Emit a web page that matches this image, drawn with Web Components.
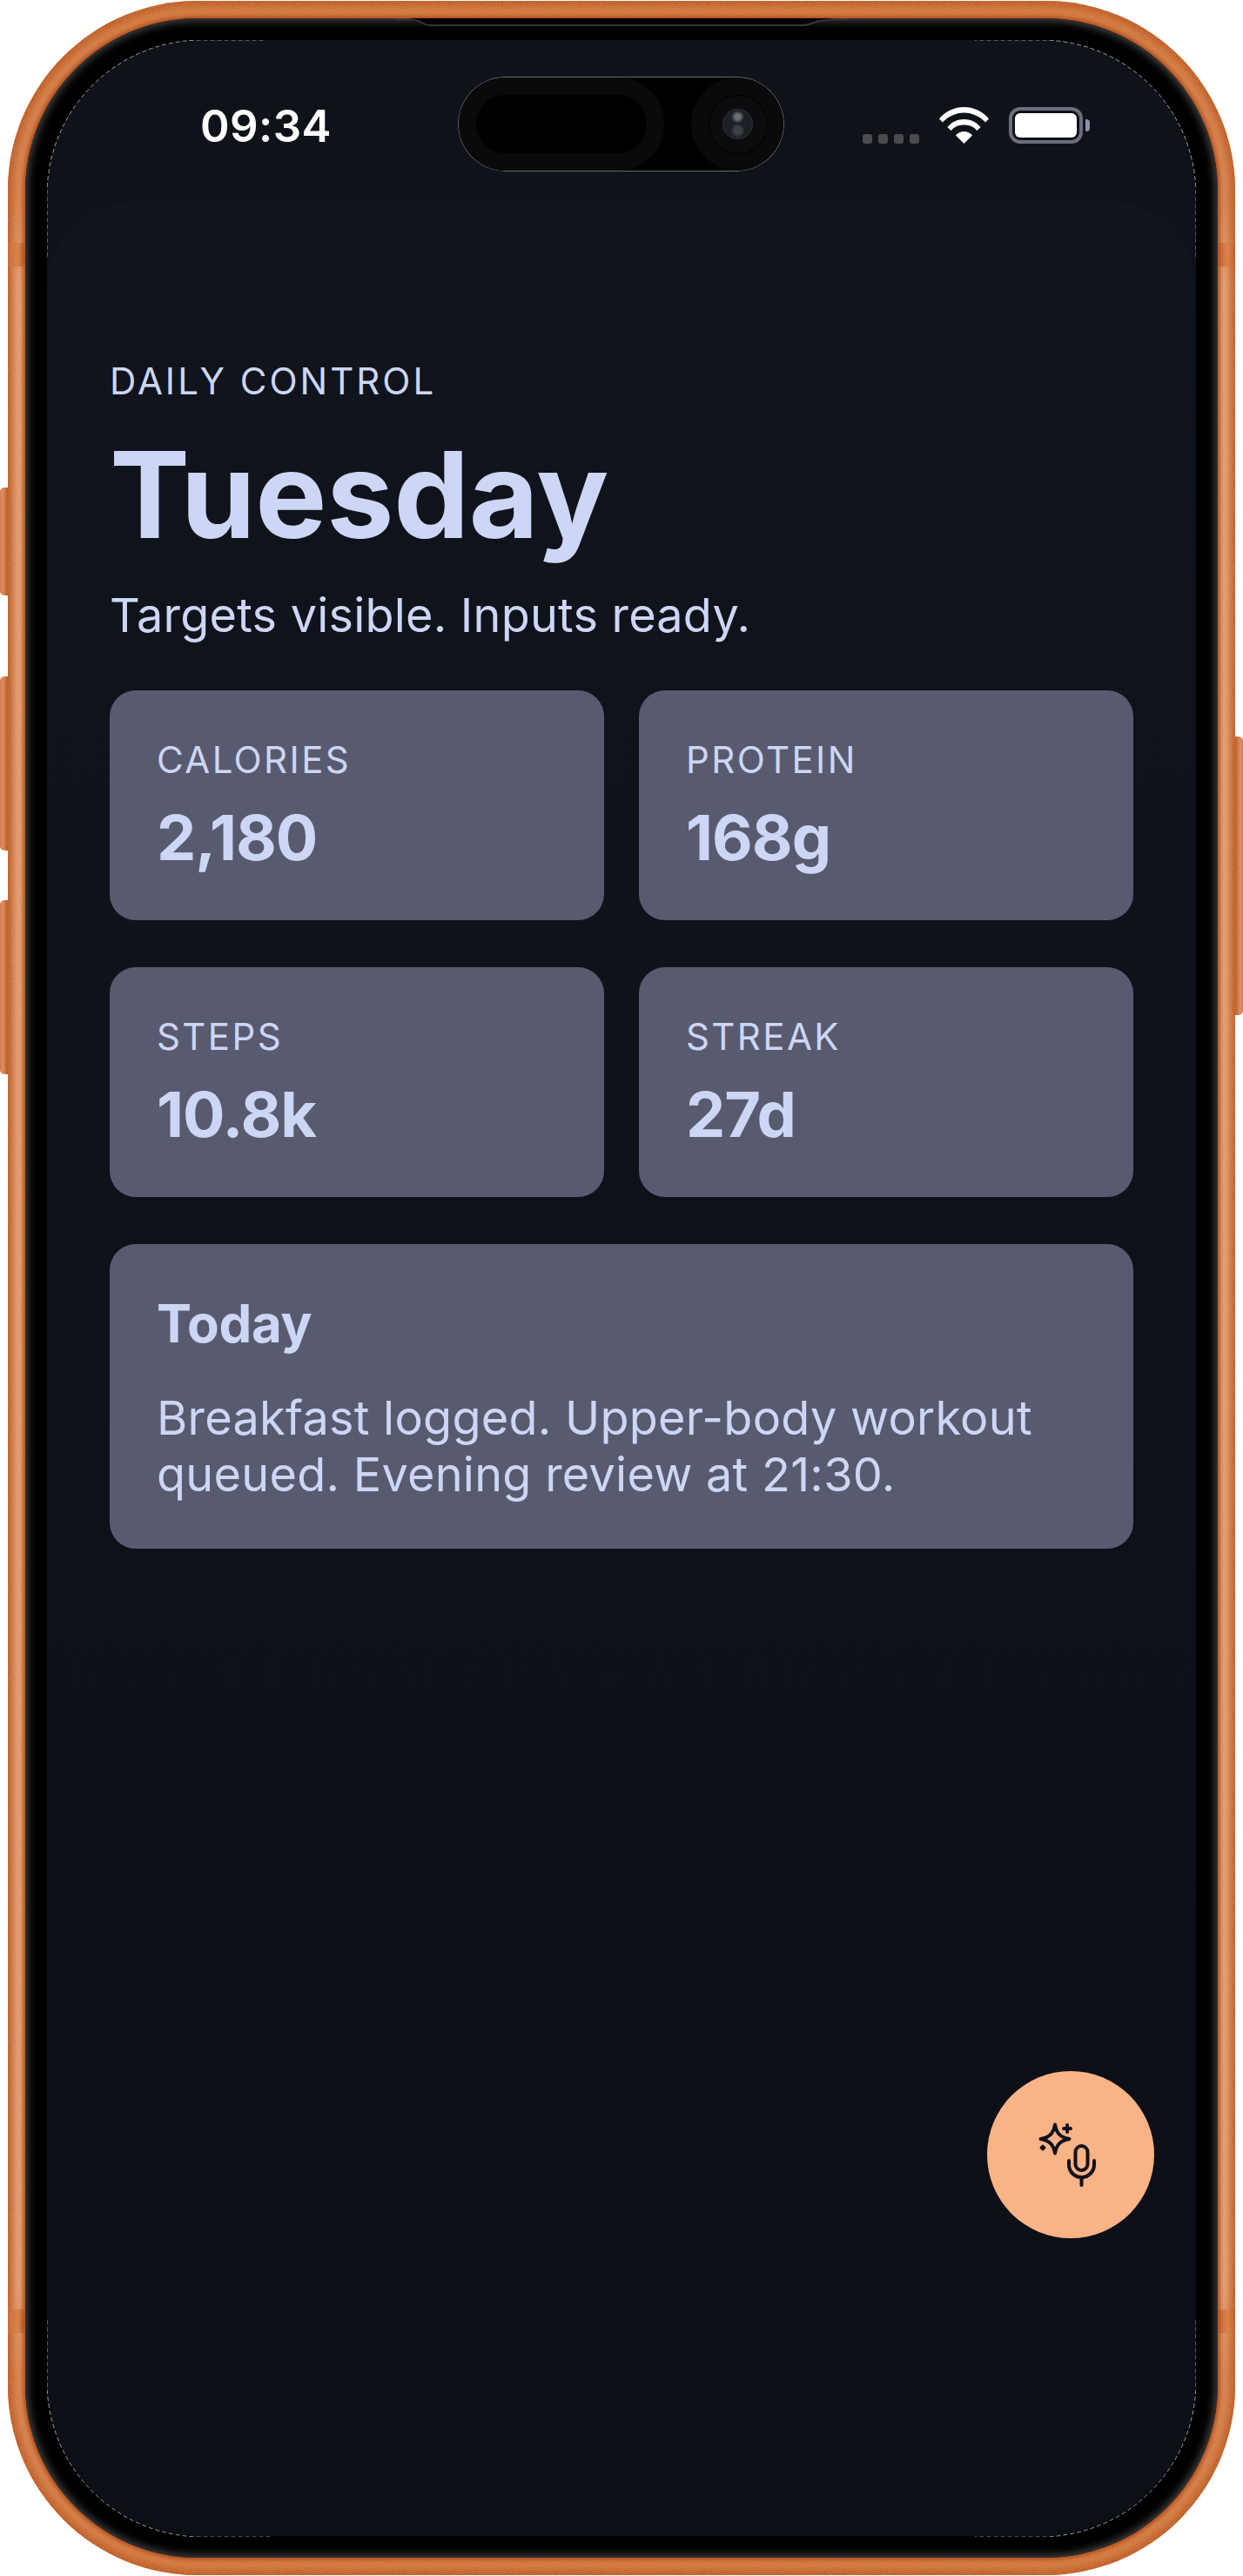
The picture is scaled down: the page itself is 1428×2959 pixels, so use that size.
<!DOCTYPE html>
<html>
  <head>
    <meta charset="utf-8">
    <title>Daily Control</title>
    <style>
      html, body { margin: 0; background: #fff; }
      body { font-family: "Inter", "Noto Sans", sans-serif; color: #cdd6f4; }
      .stats { display: grid; grid-template-columns: 1fr 1fr; column-gap: 40px; row-gap: 54px; margin-top: 55px; }
    </style>
  </head>
  <body>
    <phone-frame>
      <status-bar slot="status" time="09:34"></status-bar>
      <day-header eyebrow="DAILY CONTROL" title="Tuesday" sub="Targets visible. Inputs ready."></day-header>
      <div class="stats">
        <stat-card label="CALORIES" value="2,180"></stat-card>
        <stat-card label="PROTEIN" value="168g"></stat-card>
        <stat-card label="STEPS" value="10.8k"></stat-card>
        <stat-card label="STREAK" value="27d"></stat-card>
      </div>
      <note-card title="Today">Breakfast logged. Upper-body workout queued. Evening review at 21:30.</note-card>
      <voice-fab slot="fab"></voice-fab>
    </phone-frame>

    <script>
      // small helper, every element just sets its shadow markup once
      const shadow = (el, html) => { el.attachShadow({mode: 'open'}).innerHTML = html; };

      class PhoneFrame extends HTMLElement {
        constructor() {
          super();
          shadow(this, `
            <style>
              :host { display: block; position: relative; box-sizing: border-box; width: 1410px; height: 2957px; margin: 1px 0 0 9px; padding: 20px; border-radius: 218px; background: linear-gradient(180deg, #d57a44 0, #dc8753 230px, #eca87e 330px, #eca87e 2620px, #dc8753 2730px, #d57a44 100%); box-shadow: inset 0 0 8px 6px #bd5822; }
              .btn { position: absolute; width: 12px; }
              .left { left: -9px; border-radius: 5px 0 0 5px; background: linear-gradient(90deg, #d07a46, #dd9163 25%, #c0622e 70%, #c0622e); }
              .right { right: -9px; border-radius: 0 5px 5px 0; background: linear-gradient(270deg, #d07a46, #dd9163 25%, #c0622e 70%, #c0622e); }
              .band { position: absolute; width: 20px; height: 27px; background: linear-gradient(90deg, #c9652f, #dd7f4a 60%, #b9551f); }
              .grain { position: absolute; left: 0; top: 0; pointer-events: none; }
              .bezel { position: relative; box-sizing: border-box; height: 100%; padding: 25px; border-radius: 198px; background: #000; box-shadow: 0 0 4px 3px #b5521f, inset 0 0 10px 3px #454545; }
              .screen { position: relative; display: flex; flex-direction: column; height: 100%; border-radius: 178px; overflow: hidden; background: #0f1219; }
              .content { flex: 1; padding: 181px 72px 0; border-radius: 100px 100px 0 0; background: linear-gradient(180deg, #10141c 0%, #0f1219 35%, #0d1017 70%, #0c0f16 100%); }
              .lip, .hair { position: absolute; pointer-events: none; }
              .lip { left: 0; top: 0; }
              .hair { left: 25px; top: 25px; }
            </style>
            <div class="btn left" style="top:559px;height:124px"></div>
            <div class="btn left" style="top:776px;height:200px"></div>
            <div class="btn left" style="top:1033px;height:200px"></div>
            <div class="btn right" style="top:845px;height:320px"></div>
            <div class="band" style="left:0;top:278px"></div>
            <div class="band" style="right:0;top:278px"></div>
            <div class="band" style="left:0;top:2652px"></div>
            <div class="band" style="right:0;top:2652px"></div>
            <svg class="grain" width="1410" height="2957" viewBox="0 0 1410 2957" fill="none">
              <filter id="copper" filterUnits="userSpaceOnUse" x="0" y="0" width="1410" height="2957">
                <feTurbulence type="fractalNoise" baseFrequency=".8" numOctaves="2" seed="4"/>
                <feColorMatrix values="0 0 0 0 .62  0 0 0 0 .27  0 0 0 0 .1  0 0 0 1.600 -.62"/>
                <feComposite in2="SourceGraphic" operator="in"/>
              </filter>
              <rect x="10" y="10" width="1390" height="2937" rx="208" stroke="#000" stroke-width="20" filter="url(#copper)"/>
            </svg>
            <div class="bezel">
              <div class="screen">
                <slot name="status"></slot>
                <div class="content"><slot></slot></div>
                <slot name="fab"></slot>
              </div>
              <svg class="hair" width="1320" height="2868" viewBox="0 0 1320 2868" fill="none" stroke="#fff" stroke-width=".6" stroke-dasharray="5 3">
                <path d="M0 249V178A178 178 0 0 1 178 0H250"/>
                <path d="M1320 249V178A178 178 0 0 0 1142 0H1066"/>
                <path d="M0 2619V2690A178 178 0 0 0 178 2868H258"/>
                <path d="M1320 2619V2690A178 178 0 0 1 1142 2868H1066"/>
              </svg>
              <svg class="lip" width="1370" height="30" viewBox="0 0 1370 30">
                <path d="M438 0H932Q915 2 903 6T890 9H480Q467 9 455 6T438 0Z" fill="#000"/>
                <path d="M425 1H438Q448 1 455 5T470 8H890Q900 8 906 5T932 1H945" fill="none" stroke="#37373b" stroke-width="2"/>
              </svg>
            </div>
          `);
        }
      }

      class StatusBar extends HTMLElement {
        constructor() {
          super();
          shadow(this, `
            <style>
              :host { display: flex; position: relative; flex: none; height: 186px; box-sizing: border-box; padding: 10px 122px 0 176px; align-items: center; justify-content: space-between; color: #fff; }
              .time { font: 600 51px/1 "Inter", sans-serif; letter-spacing: .4px; }
              .icons { display: flex; align-items: flex-start; height: 42px; }
              .dots { display: flex; gap: 7px; margin-top: 31px; }
              .dots i { display: block; width: 11px; height: 11px; border-radius: 3px; background: #4b4b4d; }
              .wifi { display: block; margin: 0 23px; }
              .batt { position: relative; box-sizing: border-box; width: 85px; height: 42px; border: 4px solid #6c6c7c; border-radius: 13px; padding: 3px; }
              .batt b { display: block; height: 100%; border-radius: 6px; background: #fff; }
              .nub { width: 5px; height: 14px; margin: 14px 0 0 3px; border-radius: 0 4px 4px 0; background: #8c8fa6; }
              .island { position: absolute; left: 473px; top: 43px; width: 373px; height: 107px; border-radius: 54px; background: #000; box-shadow: 0 0 0 .7px rgba(255,255,255,.5); display: flex; justify-content: space-between; overflow: hidden; }
              .pill { box-sizing: border-box; width: 236px; height: 107px; padding: 20px; border-radius: 0 54px 54px 0; background: #0a0a0a; }
              .pill i { display: block; height: 67px; border-radius: 34px; background: #000; }
              .cam { display: flex; align-items: center; justify-content: center; width: 107px; height: 107px; border-radius: 50%; background: #0a0a0a; margin-right: -1px; }
              .ring { display: flex; align-items: center; justify-content: center; width: 66px; height: 66px; border-radius: 50%; background: #0c0c0e; box-shadow: 0 0 0 1px #000; }
              .lens { width: 33px; height: 33px; border-radius: 50%; background: radial-gradient(circle at 50% 72%, #3f4146 0 14%, transparent 28%), radial-gradient(circle at 50% 25%, #6d7078 0 10%, transparent 25%), #1d1f26; box-shadow: 0 0 0 1px #2e3036; }
            </style>
            <span class="time"></span>
            <div class="icons">
              <div class="dots"><i></i><i></i><i></i><i></i></div>
              <svg class="wifi" width="57" height="42" viewBox="0 0 57 42" fill="#fff">
                <path d="M0 13.500C7.500 4.500 17.500 0 28.500 0S49.500 4.500 57 13.500L53 17.500C46.500 10.500 38 6.500 28.500 6.500S10.500 10.500 4 17.500Z"/>
                <path d="M9.500 23C14.500 17 21 14 28.500 14S42.500 17 47.500 23L43.500 27C39.500 22.500 34.500 20.500 28.500 20.500S17.500 22.500 13.500 27Z"/>
                <path d="M19 32.500C21.500 29.500 25 28 28.500 28S35.500 29.500 38 32.500L28.500 42Z"/>
              </svg>
              <div class="batt"><b></b></div>
              <div class="nub"></div>
            </div>
            <div class="island">
              <div class="pill"><i></i></div>
              <div class="cam"><div class="ring"><div class="lens"></div></div></div>
            </div>
          `);
          this.shadowRoot.querySelector('.time').textContent = this.getAttribute('time');
        }
      }

      class DayHeader extends HTMLElement {
        constructor() {
          super();
          shadow(this, `
            <style>
              :host { display: block; }
              div { color: #cdd6f4; }
              .eyebrow { font: 400 42px/50px "Inter", sans-serif; letter-spacing: 3px; }
              .title { font: 700 138px/150px "Inter", sans-serif; margin-top: 30px; letter-spacing: -.3px; }
              .sub { font: 400 54px/62px "Inter", sans-serif; margin-top: 33px; letter-spacing: .2px; }
            </style>
            <div class="eyebrow"></div>
            <div class="title"></div>
            <div class="sub"></div>
          `);
          for (const k of ['eyebrow', 'title', 'sub'])
            this.shadowRoot.querySelector('.' + k).textContent = this.getAttribute(k);
        }
      }

      class StatCard extends HTMLElement {
        constructor() {
          super();
          shadow(this, `
            <style>
              :host { display: block; box-sizing: border-box; height: 264px; padding: 55px 54px 0; border-radius: 30px; background: #585b70; }
              .label { font: 400 42px/50px "Inter", sans-serif; letter-spacing: 2.400px; color: #cdd6f4; }
              .value { font: 700 72px/88px "Inter", sans-serif; letter-spacing: -1px; margin-top: 20px; color: #cdd6f4; }
            </style>
            <div class="label"></div>
            <div class="value"></div>
          `);
          this.shadowRoot.querySelector('.label').textContent = this.getAttribute('label');
          this.shadowRoot.querySelector('.value').textContent = this.getAttribute('value');
        }
      }

      class NoteCard extends HTMLElement {
        constructor() {
          super();
          shadow(this, `
            <style>
              :host { display: block; box-sizing: border-box; margin-top: 54px; padding: 55px 54px 53px; border-radius: 30px; background: #585b70; }
              h2 { margin: 0; font: 700 60px/72px "Inter", sans-serif; letter-spacing: -.3px; color: #cdd6f4; }
              p { margin: 40px 0 0; font: 400 54px/65px "Inter", sans-serif; letter-spacing: .25px; color: #cdd6f4; }
            </style>
            <h2></h2>
            <p><slot></slot></p>
          `);
          this.shadowRoot.querySelector('h2').textContent = this.getAttribute('title');
        }
      }

      class VoiceFab extends HTMLElement {
        constructor() {
          super();
          shadow(this, `
            <style>
              :host { display: block; position: absolute; right: 48px; bottom: 342px; width: 192px; height: 192px; border-radius: 50%; background: #fab387; }
              svg { display: block; }
            </style>
            <svg width="192" height="192" viewBox="0 0 192 192" fill="none" stroke="#11111b" stroke-width="4" stroke-linecap="round" stroke-linejoin="round">
              <path d="M78 61.500C80 72 84 76 94.500 78C84 80 80 84 78 94.500C76 84 72 80 61.500 78C72 76 76 72 78 61.500Z"/>
              <path d="M92 62V70M88 66H96"/>
              <path d="M64 85.500L66.500 88L64 90.500L61.500 88Z" fill="#11111b" stroke-width="2"/>
              <rect x="101.500" y="86" width="14" height="28" rx="7"/>
              <path d="M94 103V107.500A14.500 14.500 0 0 0 123 107.500V103"/>
              <path d="M108.500 122V131"/>
            </svg>
          `);
        }
      }

      customElements.define('phone-frame', PhoneFrame);
      customElements.define('status-bar', StatusBar);
      customElements.define('day-header', DayHeader);
      customElements.define('stat-card', StatCard);
      customElements.define('note-card', NoteCard);
      customElements.define('voice-fab', VoiceFab);
    </script>
  </body>
</html>
